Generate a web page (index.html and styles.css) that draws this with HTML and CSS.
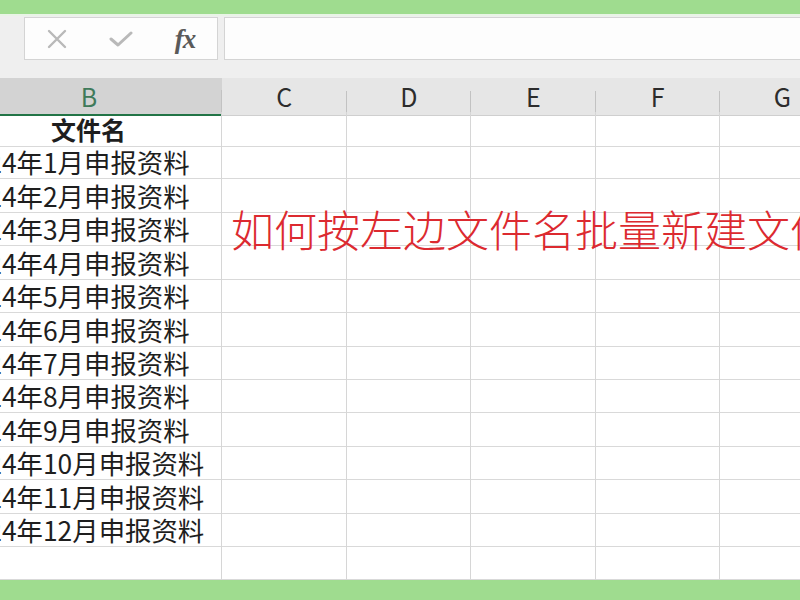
FILE: index.html
```html
<!DOCTYPE html>
<html lang="zh-CN">
<head>
<meta charset="utf-8">
<title>文件名</title>
<link rel="stylesheet" href="styles.css">
</head>
<body>
<div class="screen">
  <div class="band-top"></div>
  <div class="toolbar">
    <div class="fxbox">
      <span class="slot">
        <svg width="20" height="20" viewBox="0 0 20 20"><path d="M2 2 L18 18 M18 2 L2 18" stroke="#b9b9b9" stroke-width="2.4" fill="none" stroke-linecap="round"/></svg>
      </span>
      <span class="slot">
        <svg width="24" height="16" viewBox="0 0 24 16"><path d="M2 8 L9 14 L22 2" stroke="#b9b9b9" stroke-width="3" fill="none" stroke-linecap="round" stroke-linejoin="round"/></svg>
      </span>
      <span class="slot fx">fx</span>
    </div>
    <div class="formula"></div>
  </div>
  <div class="sheet">
    <div class="grid colhead">
      <div class="h sel">B</div><div class="h">C</div><div class="h">D</div><div class="h">E</div><div class="h">F</div><div class="h">G</div>
    </div>
    <div class="grid row"><div class="c title">文件名</div><div class="c"></div><div class="c"></div><div class="c"></div><div class="c"></div><div class="c"></div></div>
    <div class="grid row"><div class="c">2024年1月申报资料</div><div class="c"></div><div class="c"></div><div class="c"></div><div class="c"></div><div class="c"></div></div>
    <div class="grid row"><div class="c">2024年2月申报资料</div><div class="c"></div><div class="c"></div><div class="c"></div><div class="c"></div><div class="c"></div></div>
    <div class="grid row"><div class="c">2024年3月申报资料</div><div class="c"></div><div class="c"></div><div class="c"></div><div class="c"></div><div class="c"></div></div>
    <div class="grid row"><div class="c">2024年4月申报资料</div><div class="c"></div><div class="c"></div><div class="c"></div><div class="c"></div><div class="c"></div></div>
    <div class="grid row"><div class="c">2024年5月申报资料</div><div class="c"></div><div class="c"></div><div class="c"></div><div class="c"></div><div class="c"></div></div>
    <div class="grid row"><div class="c">2024年6月申报资料</div><div class="c"></div><div class="c"></div><div class="c"></div><div class="c"></div><div class="c"></div></div>
    <div class="grid row"><div class="c">2024年7月申报资料</div><div class="c"></div><div class="c"></div><div class="c"></div><div class="c"></div><div class="c"></div></div>
    <div class="grid row"><div class="c">2024年8月申报资料</div><div class="c"></div><div class="c"></div><div class="c"></div><div class="c"></div><div class="c"></div></div>
    <div class="grid row"><div class="c">2024年9月申报资料</div><div class="c"></div><div class="c"></div><div class="c"></div><div class="c"></div><div class="c"></div></div>
    <div class="grid row"><div class="c">2024年10月申报资料</div><div class="c"></div><div class="c"></div><div class="c"></div><div class="c"></div><div class="c"></div></div>
    <div class="grid row"><div class="c">2024年11月申报资料</div><div class="c"></div><div class="c"></div><div class="c"></div><div class="c"></div><div class="c"></div></div>
    <div class="grid row"><div class="c">2024年12月申报资料</div><div class="c"></div><div class="c"></div><div class="c"></div><div class="c"></div><div class="c"></div></div>
    <div class="grid row"><div class="c"></div><div class="c"></div><div class="c"></div><div class="c"></div><div class="c"></div><div class="c"></div></div>
    <div class="overlay">如何按左边文件名批量新建文件夹</div>
  </div>
  <div class="band-bottom"></div>
</div>
</body>
</html>
```

FILE: styles.css
```css
html, body {
  margin: 0;
  padding: 0;
  width: 800px;
  height: 600px;
  overflow: hidden;
  background: #ffffff;
}

.screen {
  display: flex;
  flex-direction: column;
  width: 800px;
  height: 600px;
  font-family: "Noto Sans CJK SC", "Noto Sans", sans-serif;
  color: #1e1e1e;
}

.band-top {
  height: 14px;
  flex: none;
  background: #9fdc8f;
  border-bottom: 2px solid #e9f4e6;
}

.toolbar {
  height: 62px;
  flex: none;
  box-sizing: border-box;
  background: #efefef;
  display: flex;
  align-items: flex-start;
  gap: 6px;
  padding: 1px 0 0 24px;
}

.fxbox {
  width: 194px;
  height: 43px;
  box-sizing: border-box;
  background: #fdfdfd;
  border: 1px solid #d4d4d4;
  display: flex;
  align-items: center;
}

.slot {
  width: 64px;
  height: 100%;
  display: flex;
  align-items: center;
  justify-content: center;
}

.fx {
  font-family: "Liberation Serif", serif;
  font-style: italic;
  font-weight: bold;
  font-size: 27px;
  color: #5a5a5a;
  letter-spacing: -1px;
  padding-top: 2px;
  box-sizing: border-box;
}

.formula {
  flex: 1;
  height: 43px;
  box-sizing: border-box;
  background: #fdfdfd;
  border: 1px solid #d4d4d4;
  border-right: none;
}

.sheet {
  flex: 1;
  position: relative;
  overflow: hidden;
  background: #ffffff;
}

.grid {
  display: grid;
  grid-template-columns: 266px repeat(5, 124.5px);
  margin-left: -44px;
}

.colhead {
  height: 34px;
}

.h {
  box-sizing: border-box;
  background: #e6e6e6 linear-gradient(#c2c2c2, #c2c2c2) right bottom / 1px 24px no-repeat;
  border-bottom: 1px solid #cfcfcf;
  font-size: 25px;
  line-height: 36px;
  text-align: center;
  color: #2c2c2c;
}

.h.sel {
  background: #d3d3d3 linear-gradient(#c2c2c2, #c2c2c2) right bottom / 1px 24px no-repeat;
  border-bottom: 2px solid #227446;
  color: #3f7a5a;
}

.row {
  height: 33.43px;
}

.c {
  box-sizing: border-box;
  border-right: 1px solid #d6d6d6;
  border-bottom: 1px solid #d9d9d9;
  font-size: 26.4px;
  line-height: 33px;
  padding-left: 2px;
  white-space: nowrap;
}

.c.title {
  font-weight: bold;
  font-size: 25px;
  line-height: 34px;
  text-align: center;
  padding-left: 0;
}

.overlay {
  position: absolute;
  left: 231px;
  top: 128px;
  font-size: 43px;
  line-height: 44px;
  font-weight: 300;
  color: #dc2a30;
  white-space: nowrap;
}

.band-bottom {
  height: 20px;
  flex: none;
  background: #9fdc8f;
}
```
